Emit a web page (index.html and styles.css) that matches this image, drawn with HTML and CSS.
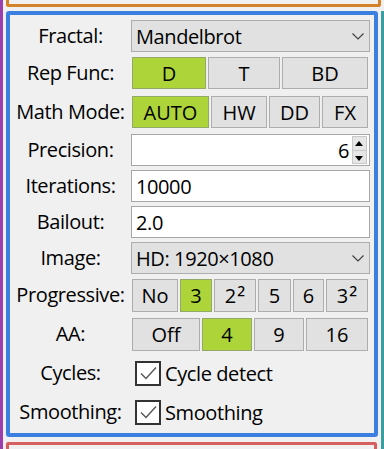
FILE: index.html
```html
<!DOCTYPE html>
<html lang="en">
<head>
  <meta charset="UTF-8">
  <meta name="viewport" content="width=device-width, initial-scale=1.0">
  <title>Fractal settings</title>
  <link rel="stylesheet" href="styles.css">
</head>
<body>
  <div class="screen">
    <div class="rail-left"></div>

    <div class="stack">
      <!-- previous panel (only its bottom shows) -->
      <div class="prev-box"></div>

      <section class="panel">
        <span class="lbl">Fractal:</span>
        <div class="combo">
          <span>Mandelbrot</span>
          <svg class="chev" width="12" height="7" viewBox="0 0 12 7"><polyline points="0.5,0.5 6,6 11.5,0.5" fill="none" stroke="#3c3c3c" stroke-width="1.1"/></svg>
        </div>

        <span class="lbl">Rep Func:</span>
        <div class="btns rep">
          <button class="on">D</button>
          <button>T</button>
          <button>BD</button>
        </div>

        <span class="lbl">Math Mode:</span>
        <div class="btns math">
          <button class="on">AUTO</button>
          <button>HW</button>
          <button>DD</button>
          <button>FX</button>
        </div>

        <span class="lbl">Precision:</span>
        <div class="field spin">
          <span class="num">6</span>
          <div class="spin-btns">
            <span class="arrow up"></span>
            <span class="arrow down"></span>
          </div>
        </div>

        <span class="lbl">Iterations:</span>
        <div class="field">10000</div>

        <span class="lbl">Bailout:</span>
        <div class="field">2.0</div>

        <span class="lbl">Image:</span>
        <div class="combo">
          <span>HD: 1920×1080</span>
          <svg class="chev" width="12" height="7" viewBox="0 0 12 7"><polyline points="0.5,0.5 6,6 11.5,0.5" fill="none" stroke="#3c3c3c" stroke-width="1.1"/></svg>
        </div>

        <span class="lbl">Progressive:</span>
        <div class="btns prog">
          <button>No</button>
          <button class="on">3</button>
          <button>2<span class="sq">²</span></button>
          <button>5</button>
          <button>6</button>
          <button>3<span class="sq">²</span></button>
        </div>

        <span class="lbl">AA:</span>
        <div class="btns aa">
          <button>Off</button>
          <button class="on">4</button>
          <button>9</button>
          <button>16</button>
        </div>

        <span class="lbl lbl-check">Cycles:</span>
        <label class="check">
          <span class="box"><svg width="17" height="14" viewBox="0 0 17 14"><polyline points="1,7.5 6,12.5 16,1.5" fill="none" stroke="#555" stroke-width="1.4"/></svg></span>
          Cycle detect
        </label>

        <span class="lbl lbl-check">Smoothing:</span>
        <label class="check">
          <span class="box"><svg width="17" height="14" viewBox="0 0 17 14"><polyline points="1,7.5 6,12.5 16,1.5" fill="none" stroke="#555" stroke-width="1.4"/></svg></span>
          Smoothing
        </label>
      </section>

      <!-- next panel (only its top shows) -->
      <div class="next-box"></div>
    </div>

    <div class="rail-right"></div>
  </div>
</body>
</html>
```

FILE: styles.css
```css
/* reset */
* {
  margin: 0;
  padding: 0;
  box-sizing: border-box;
}

body {
  background: #f0f0f0;
  font-family: "Open Sans", "Noto Sans", sans-serif;
  font-size: 20px;
  letter-spacing: -0.4px;
  color: #000;
  overflow: hidden;
}

/* outer frame */
.screen {
  display: flex;
  height: 449px;
}

.rail-left {
  width: 3px;
  background: #9b3fae;
}

.stack {
  width: 375px;
  margin-left: 3px;
}

.rail-right {
  width: 3px;
  margin: 11px 0 0 0;
  background: #3a9ea0;
}

.prev-box {
  height: 7px;
  border: 3px solid #d4822a;
  border-top: none;
  border-radius: 0 0 3px 3px;
}

.next-box {
  width: 371px;
  height: 20px;
  margin-top: 5px;
  border: 3px solid #d65f5f;
  border-bottom: none;
  border-radius: 3px 3px 0 0;
}

/* settings panel */
.panel {
  width: 372px;
  height: 426px;
  margin-top: 4px;
  padding: 5px 4px 4px 0;
  border: 4px solid #3b80e0;
  border-radius: 3px;
  display: grid;
  grid-template-columns: 121px 1fr;
  grid-template-rows: 32px 34px 33px 31px 31px 31px 32px 34px 33px 34px 34px;
  row-gap: 5px;
}

.lbl {
  align-self: start;
  line-height: 32px;
  text-align: center;
  white-space: nowrap;
}

.lbl-check {
  align-self: center;
}

/* combo box */
.combo {
  height: 32px;
  display: flex;
  align-items: center;
  justify-content: space-between;
  padding: 0 5px 0 4px;
  background: #e1e1e1;
  border: 1px solid #adadad;
}

.chev {
  margin-top: 1px;
}

/* text fields */
.field {
  height: 32px;
  display: flex;
  align-items: center;
  padding: 0 4px;
  background: #fff;
  border: 1px solid #a6a6a6;
}

.spin {
  justify-content: flex-end;
  padding: 1px 2px 1px 4px;
}

.num {
  margin-right: 3px;
}

.spin-btns {
  display: flex;
  flex-direction: column;
  width: 15px;
  height: 100%;
}

.spin-btns .arrow {
  flex: 1;
  position: relative;
  background: #e6e6e6;
  border: 1px solid #c8c8c8;
}

.spin-btns .arrow + .arrow {
  border-top: none;
}

.arrow::after {
  content: "";
  position: absolute;
  left: 2px;
  top: 4px;
  border-left: 4.5px solid transparent;
  border-right: 4.5px solid transparent;
}

.up::after {
  border-bottom: 5px solid #000;
}

.down::after {
  top: 5px;
  border-top: 5px solid #000;
}

/* toggle buttons */
.btns {
  display: grid;
  column-gap: 2px;
  height: 32px;
  margin-left: 1px;
  width: 236px;
}

.rep { grid-template-columns: 74px 72px 86px; }
.math { grid-template-columns: 77px 56px 51px 46px; }
.prog { grid-template-columns: 46px 32px 42px 33px 31px 42px; }
.aa { grid-template-columns: 68px 50px 50px 62px; }

.prog, .aa {
  height: 33px;
}

.btns button {
  font: inherit;
  color: #000;
  background: #e1e1e1;
  border: 1px solid #adadad;
  padding: 0;
}

.btns button.on {
  background: #add53a;
  border-color: #94a86a;
}

/* the squared marks are drawn bigger, as in the original font */
.sq {
  font-size: 23px;
  line-height: 0;
  margin-left: 1px;
  vertical-align: -3px;
}

/* checkboxes */
.check {
  display: flex;
  align-items: center;
  gap: 4px;
  padding-left: 4px;
}

.box {
  width: 26px;
  height: 25px;
  display: flex;
  align-items: center;
  justify-content: center;
  background: #fff;
  border: 2px solid #333;
}
```
